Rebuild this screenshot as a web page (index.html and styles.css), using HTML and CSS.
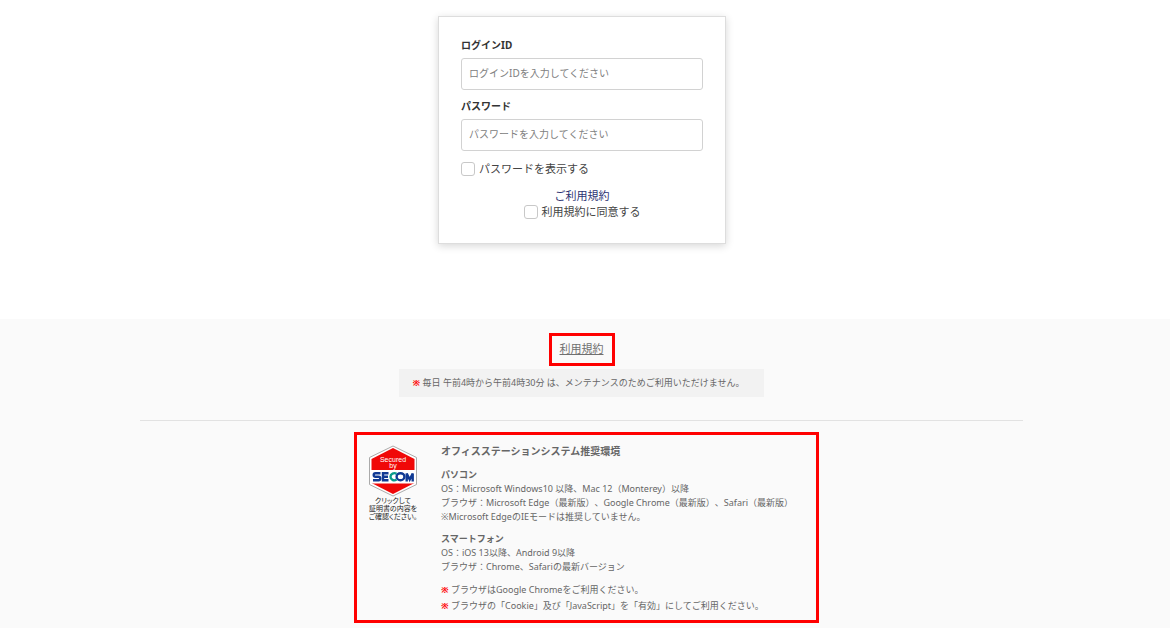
FILE: index.html
```html
<!DOCTYPE html>
<html lang="ja">
<head>
<meta charset="utf-8">
<meta name="viewport" content="width=device-width, initial-scale=1">
<title>ログイン</title>
<link rel="stylesheet" href="styles.css">
</head>
<body>
<main class="login">
  <form class="card">
    <label class="label" for="login-id">ログインID</label>
    <input class="field" id="login-id" type="text" placeholder="ログインIDを入力してください">
    <label class="label" for="password">パスワード</label>
    <input class="field" id="password" type="password" placeholder="パスワードを入力してください">
    <label class="check"><input class="box" type="checkbox">パスワードを表示する</label>
    <div class="agree">
      <a class="terms" href="#terms">ご利用規約</a>
      <label class="check"><input class="box" type="checkbox">利用規約に同意する</label>
    </div>
  </form>
</main>
<footer class="footer">
  <div class="mark mark-link"><a class="footer-link" href="#terms">利用規約</a></div>
  <p class="notice"><span class="red">※</span> 毎日 午前4時から午前4時30分 は、メンテナンスのためご利用いただけません。</p>
  <hr class="rule">
  <section class="mark environment">
    <a class="seal" href="#secom">
      <svg class="seal-logo" viewBox="0 0 50 52" role="img" aria-label="Secured by SECOM">
        <path d="M25 1 48.500 12.500V39.500L25 51 1.500 39.500V12.500Z" fill="#fff" stroke="#aaa" stroke-width="1"/>
        <path d="M25 3 46.500 14V38L25 49 3.500 38V14Z" fill="#f00808"/>
        <path d="M2 25H48V38.500H2Z" fill="#fff"/>
        <text x="25" y="17" class="seal-small">Secured</text>
        <text x="25" y="23" class="seal-small">by</text>
        <g fill="none" stroke="#103a94" stroke-width="2.400">
          <path d="M12.500 28.200H7.500Q5.700 28.200 5.700 30T7.500 31.700H10.500Q12.300 31.700 12.300 33.500T10.500 35.200H5"/>
          <path d="M20.500 28.200H15V35.200H20.500M15 31.700H20"/>
          <ellipse cx="32.500" cy="31.700" rx="3.900" ry="3.500"/>
          <path d="M38.700 36.400V28.500L41.700 34.500 44.700 28.500V36.400"/>
          <path d="M28.500 28.800Q26.500 27.500 24.500 28.600 22.500 29.500 22.500 31.700T24.500 34.900Q26.500 36 28.500 34.600" stroke="#0a9b8c"/>
        </g>
      </svg>
      <span class="seal-caption">クリックして<br>証明書の内容を<br>ご確認ください。</span>
    </a>
    <div class="details">
      <h2 class="title">オフィスステーションシステム推奨環境</h2>
      <h3 class="device">パソコン</h3>
      <p class="text">OS：Microsoft Windows10 以降、Mac 12（Monterey）以降<br>ブラウザ：Microsoft Edge（最新版）、Google Chrome（最新版）、Safari（最新版）<br>※Microsoft EdgeのIEモードは推奨していません。</p>
      <h3 class="device">スマートフォン</h3>
      <p class="text">OS：iOS 13以降、Android 9以降<br>ブラウザ：Chrome、Safariの最新バージョン</p>
      <ul class="notes">
        <li><span class="red">※</span> ブラウザはGoogle Chromeをご利用ください。</li>
        <li><span class="red">※</span> ブラウザの「Cookie」及び「JavaScript」を「有効」にしてご利用ください。</li>
      </ul>
    </div>
  </section>
</footer>
</body>
</html>
```
FILE: styles.css
```css
* { box-sizing: border-box; }
body {
  margin: 0;
  min-height: 100vh;
  display: flex;
  flex-direction: column;
  background: #fff;
  color: #444;
  font-family: "Noto Sans", "Noto Sans CJK JP", sans-serif;
  text-spacing-trim: space-all;
}
h2, h3, p, ul { margin: 0; padding: 0; }
.login {
  display: flex;
  justify-content: center;
  align-items: flex-start;
  padding: 16px 6px 75px 0;
}
.card {
  width: 288px;
  max-width: 100%;
  padding: 22px 22px 23px;
  display: flex;
  flex-direction: column;
  border: 1px solid #ddd;
  box-shadow: 0 2px 8px rgba(0, 0, 0, .16);
}
.label {
  margin-bottom: 7px;
  color: #333;
  font-size: 10px;
  line-height: 12px;
  font-weight: 700;
}
.field {
  height: 32px;
  margin: 0 0 10px;
  padding: 0 7px 2px;
  border: 1px solid #d2d2d2;
  border-radius: 3px;
  background: #fff;
  color: #333;
  font-family: inherit;
  font-size: 10px;
}
.field::placeholder { color: #808080; }
.check {
  display: flex;
  align-items: center;
  gap: 4px;
  font-size: 11px;
  line-height: 16px;
}
.box {
  appearance: none;
  width: 14px;
  height: 14px;
  margin: 0;
  border: 1px solid #c8c8c8;
  border-radius: 3px;
  background: #fff;
}
.box:checked { background: #23346e; }
.agree {
  margin-top: 11px;
  display: flex;
  flex-direction: column;
  align-items: center;
}
.terms {
  color: #2c3272;
  font-size: 11px;
  line-height: 16px;
  text-decoration: none;
}
.footer {
  flex: 1;
  display: flex;
  flex-direction: column;
  align-items: center;
  padding: 14px 7px 5px 0;
  background: #fafafa;
  color: #666;
}
.mark { border: 3px solid #f00; }
.mark-link { padding: 5px 8px 6px; }
.footer-link {
  display: block;
  color: #707070;
  font-size: 11px;
  line-height: 16px;
}
.notice {
  margin-top: 3px;
  padding: 6px 20px 6px 14px;
  background: #f2f2f2;
  font-size: 9px;
  line-height: 16px;
}
.red { color: #f00; font-weight: 700; }
.rule {
  width: 76%;
  margin: 23px 0 11px;
  border: 0;
  border-top: 1px solid #e2e2e2;
}
.environment {
  width: 465px;
  max-width: 100%;
  margin-left: 10px;
  padding: 8px 10px 6px 11px;
  display: flex;
  gap: 23px;
}
.seal {
  width: 50px;
  flex: none;
  padding-top: 2px;
  color: #222;
  text-align: center;
  text-decoration: none;
}
.seal-logo { display: block; width: 50px; height: 52px; }
.seal-small {
  fill: #fff;
  font-family: "Liberation Sans", sans-serif;
  font-size: 7px;
  text-anchor: middle;
}
.seal-caption {
  display: block;
  font-size: 7px;
  line-height: 8px;
  font-feature-settings: "palt";
  white-space: nowrap;
}
.title { font-size: 10px; line-height: 16px; }
.device { margin-top: 9px; font-size: 9px; line-height: 14px; }
.text { font-size: 9px; line-height: 14px; }
.text + .device { margin-top: 8px; }
.notes {
  margin-top: 8px;
  list-style: none;
  font-size: 9px;
  line-height: 16px;
}
```
